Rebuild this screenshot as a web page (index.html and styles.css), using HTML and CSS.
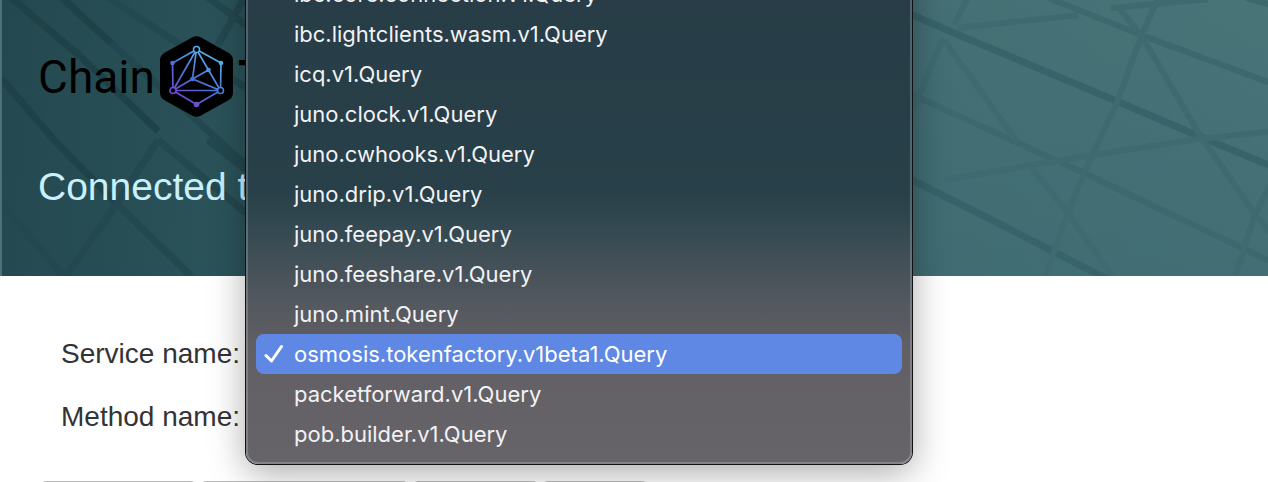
FILE: index.html
```html
<!DOCTYPE html>
<html lang="en">
<head>
<meta charset="utf-8">
<title>Chain</title>
<link rel="stylesheet" href="styles.css">
</head>
<body>
<header class="hero">
  <svg class="hero-art" viewBox="0 0 1268 276" preserveAspectRatio="xMidYMid slice" aria-hidden="true">
    <g class="line-left">
      <path d="M8-4L80 57L157 131M58-5L110 43M0 78L53 140L115 203"/>
      <path class="soft" d="M110 43L160 88L245 165M105-4L245 88M205-4L245 25M115 203L190 276M-4 197L62 276M62 280L115 205L157 140M157 140L245 213M207 140L245 170M217 45L242 0"/>
    </g>
    <g class="line-right">
      <path d="M905 12L953 33L1113 100L1207 140L1275 168M905 177L987 218L1110 281"/>
      <path class="medium" d="M1040-5L1140 35L1275 85M905 92L1017 143L1083 173L1275 264M1245-2L1275 6"/>
      <path class="soft" d="M968-5L953 25M957 28L1077 15M1110 8L1207-1M942 38L912 110M943 40L1017 143M1158-4L1140 37L1117 100L1083 173L1063 223L1043 280M1143 40L1200 137L1253 213L1275 240M943 180L1060 160L1190 140L1275 131M1030 167L1067 213L1114 281M1272 180L1253 217L1233 280M1117 7L1140 35"/>
    </g>
  </svg>
  <div class="logo">
    <span>Chain</span>
    <svg class="logo-mark" viewBox="0 0 73 81" aria-hidden="true">
      <defs>
        <linearGradient id="mesh" gradientUnits="userSpaceOnUse" x1="16" y1="66" x2="54" y2="14">
          <stop offset="0" stop-color="#7a3fd0"/>
          <stop offset=".45" stop-color="#4c70dc"/>
          <stop offset="1" stop-color="#56c0ec"/>
        </linearGradient>
      </defs>
      <path d="M32 1.4Q36.500-1 41 1.400L68 16.500Q73 19.500 73 24V57Q73 61.500 68 64.500L41 79.600Q36.500 82 32 79.600L5 64.500Q0 61.500 0 57V24Q0 19.500 5 16.500Z" fill="#000"/>
      <path d="M12.500 27L36.500 13.500L61 27L60.500 54.500L36.500 68.500L13 54.500ZM13 54.500H60.500M36.500 13.500L13 54.500L32.500 43L60.500 54.500L48.500 34L36.500 13.500L32.500 43L48.500 34" fill="none" stroke="url(#mesh)" stroke-width="1.700"/>
      <g fill="url(#mesh)"><circle cx="12.500" cy="27" r="2.300"/><circle cx="61" cy="27" r="2.300"/><circle cx="48.500" cy="34" r="2.300"/><circle cx="32.500" cy="43" r="2.300"/><circle cx="36.500" cy="68.500" r="2.800"/></g>
      <g fill="#000" stroke="url(#mesh)" stroke-width="1.600"><circle cx="36.500" cy="13.500" r="3"/><circle cx="13" cy="54.500" r="3"/><circle cx="60.500" cy="54.500" r="3"/></g>
    </svg>
    <b>T</b>
  </div>
  <h1 class="status">Connected to</h1>
</header>
<main class="panel">
  <form class="form">
    <div class="field">
      <label for="service">Service name:</label>
      <select id="service"></select>
    </div>
    <div class="field">
      <label for="method">Method name:</label>
      <select id="method"></select>
    </div>
  </form>
  <div class="tabs">
    <button type="button" class="tab tab-m"></button>
    <button type="button" class="tab tab-l"></button>
    <button type="button" class="tab tab-s"></button>
    <button type="button" class="tab tab-xs"></button>
  </div>
</main>
<div class="menu" role="listbox">
  <button type="button" role="option">ibc.core.connection.v1.Query</button>
  <button type="button" role="option">ibc.lightclients.wasm.v1.Query</button>
  <button type="button" role="option">icq.v1.Query</button>
  <button type="button" role="option">juno.clock.v1.Query</button>
  <button type="button" role="option">juno.cwhooks.v1.Query</button>
  <button type="button" role="option">juno.drip.v1.Query</button>
  <button type="button" role="option">juno.feepay.v1.Query</button>
  <button type="button" role="option">juno.feeshare.v1.Query</button>
  <button type="button" role="option">juno.mint.Query</button>
  <button type="button" role="option" aria-selected="true" class="selected"><svg class="check" viewBox="0 0 20 20" aria-hidden="true"><path d="M2 11.500L7.500 17L17.500 2.500"/></svg>osmosis.tokenfactory.v1beta1.Query</button>
  <button type="button" role="option">packetforward.v1.Query</button>
  <button type="button" role="option">pob.builder.v1.Query</button>
</div>
</body>
</html>
```
FILE: styles.css
```css
* { box-sizing: border-box; }
html { overflow: hidden; }
body {
  margin: 0;
  height: 100vh;
  overflow: hidden;
  position: relative;
  background: #fff;
  color: #333;
  font-family: "Liberation Sans", Arial, sans-serif;
}
.hero {
  position: relative;
  height: 276px;
  padding: 36px 36px 0;
  border-left: 2px solid #4e7078;
  background:
    linear-gradient(to bottom, transparent, rgba(52, 96, 108, .3)) right / 40% 100% no-repeat,
    linear-gradient(95deg, #24484f 0%, #2b535a 19%, #447075 70%, #497478 100%);
  overflow: hidden;
}
.hero-art { position: absolute; inset: 0; width: 100%; height: 100%; }
.hero-art path { fill: none; stroke-width: 7; stroke-linejoin: round; }
.line-left path { stroke: #1f4249; }
.line-left .soft { stroke: #23484f; }
.line-right path { stroke: #38636a; }
.line-right .medium { stroke: #3c686e; stroke-width: 6; }
.line-right .soft { stroke: #3f6b70; stroke-width: 6; }
.logo {
  position: relative;
  display: flex;
  align-items: center;
  gap: 5px;
  height: 81px;
  color: #000;
  font: 46px/80px Roboto, sans-serif;
}
.logo-mark { width: 73px; height: 81px; flex: none; }
.status {
  position: relative;
  margin: 48px 0 0;
  color: #c9f0ff;
  font-size: 39px;
  font-weight: 400;
  line-height: 44px;
}
.panel { padding: 56px 42px 0; }
.form { display: grid; gap: 19px; }
.field { display: flex; align-items: center; gap: 12px; }
.field label { width: 198px; font-size: 28px; line-height: 44px; text-align: right; }
.field select { width: 400px; height: 40px; font-size: 24px; }
.tabs { display: flex; gap: 7px; margin-top: 42px; }
.tab { height: 60px; padding: 0; border: 2px solid #bbb; border-radius: 4px; background: #eee; }
.tab-m { width: 153px; }
.tab-l { width: 205px; }
.tab-s { width: 123px; }
.tab-xs { width: 102px; }
.menu {
  position: absolute;
  top: -36px;
  left: 246px;
  width: 666px;
  padding: 8px;
  border: 2px solid rgba(255, 255, 255, .2);
  border-radius: 12px;
  background: linear-gradient(to bottom, #273c46 0, #284049 230px, #344951 265px, #54585f 340px, #626065 390px, #676469 100%) border-box;
  box-shadow: 0 0 0 1px #111, 0 8px 36px rgba(0, 0, 0, .35);
}
.menu button {
  position: relative;
  display: block;
  width: 100%;
  height: 40px;
  padding: 0 38px;
  border: 0;
  border-radius: 8px;
  background: none;
  color: #f2f2f4;
  font: 22px/40px Inter, sans-serif;
  text-align: left;
  white-space: nowrap;
}
.menu .selected { background: #5e88e4; color: #fff; }
.check { position: absolute; left: 8px; top: 10px; width: 20px; height: 20px; }
.check path { fill: none; stroke: #fff; stroke-width: 3; stroke-linecap: round; stroke-linejoin: round; }
```
